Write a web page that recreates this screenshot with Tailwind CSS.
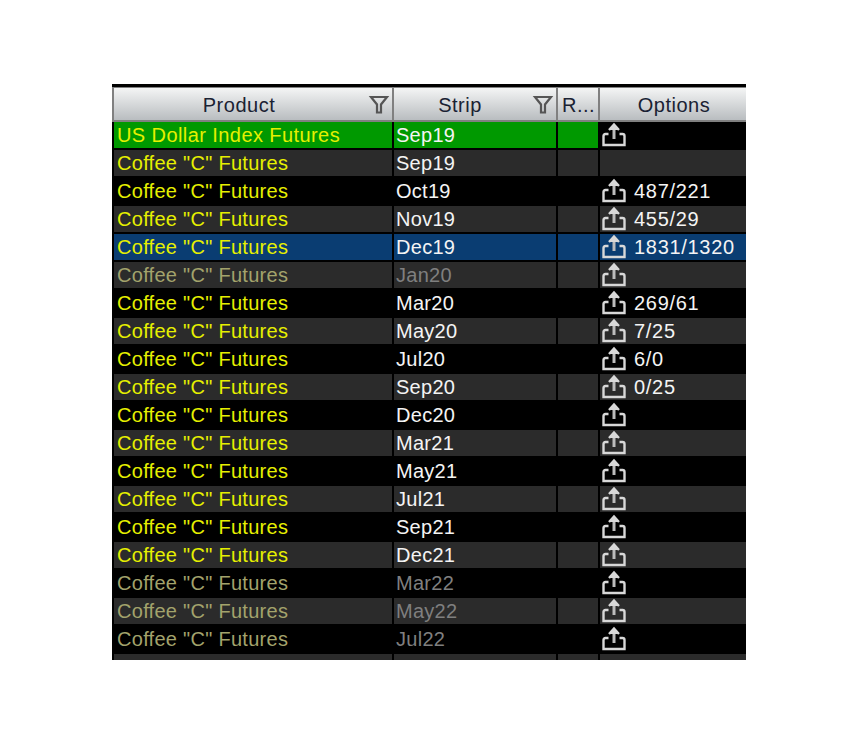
<!DOCTYPE html>
<html><head><meta charset="utf-8"><script src="https://cdn.jsdelivr.net/npm/@tailwindcss/browser@4"></script></head>
<body class="bg-white m-0">
<div class="w-[848px] h-[741px] pt-[84px] pl-[112px] font-['Liberation_Sans',Arial,sans-serif] text-[20px] leading-[26px] tracking-[0.28px]">
<div class="w-[634px] h-[576px] bg-black overflow-hidden pt-[3px]">
<div class="grid grid-cols-[282px_164px_42px_146px] h-[35px] border-t border-t-[#808080] border-b-2 border-b-[#808080] bg-gradient-to-b from-[#f4f5f5] to-[#b9bdc0] text-[#1a2233] tracking-[0.5px]">
<div class="relative border-l-2 border-l-[#808080] border-r-2 border-r-[#808080] flex items-center justify-center pt-[2px]"><span class="pr-[28px]">Product</span><svg class="absolute left-[254px] top-[6px]" width="22" height="22" viewBox="0 0 22 22" fill="none" stroke="#555" stroke-width="2.200"><path d="M3 3h16l-6 7.500v8h-4v-8z"/></svg></div>
<div class="relative border-r-2 border-r-[#808080] flex items-center justify-center pt-[2px]"><span class="pr-[30px]">Strip</span><svg class="absolute left-[138px] top-[6px]" width="22" height="22" viewBox="0 0 22 22" fill="none" stroke="#555" stroke-width="2.200"><path d="M3 3h16l-6 7.500v8h-4v-8z"/></svg></div>
<div class="border-r-2 border-r-[#808080] pl-[4px] flex items-center overflow-hidden pt-[2px]"><span>R...</span></div>
<div class="flex items-center justify-center pt-[2px] pl-[2px]"><span>Options</span></div>
</div>
<div class="flex flex-col gap-[2px] text-[#f4f4f4]">

<div class="grid grid-cols-[278px_162px_40px_146px] gap-x-[2px] ml-[2px] h-[26px]"><div class="bg-[#009900] text-[#e6f000] pl-[3px] tracking-[0.42px]">US Dollar Index Futures</div><div class="bg-[#009900] pl-[2px]">Sep19</div><div class="bg-[#009900]"></div><div class="flex pl-[2px]"><svg width="26" height="26" viewBox="0 0 26 26" fill="none" stroke="#d8d8d8" stroke-width="2.400"><path d="M12 5v12" stroke-width="3" stroke="#bcbcbc"/><path d="M7 8 12 2.500 17 8" fill="#d8d8d8"/><path d="M6.500 12H3.500Q1.500 12 1.500 14V23H22.500V14Q22.500 12 20.500 12H17.500"/></svg></div></div>

<div class="grid grid-cols-[278px_162px_40px_146px] gap-x-[2px] ml-[2px] h-[26px]"><div class="bg-[#2b2b2b] text-[#e6f000] pl-[3px]">Coffee "C" Futures</div><div class="bg-[#2b2b2b] pl-[2px]">Sep19</div><div class="bg-[#2b2b2b]"></div><div class="bg-[#2b2b2b]"></div></div>

<div class="grid grid-cols-[278px_162px_40px_146px] gap-x-[2px] ml-[2px] h-[26px]"><div class="text-[#e6f000] pl-[3px]">Coffee "C" Futures</div><div class="pl-[2px]">Oct19</div><div></div><div class="flex pl-[2px]"><svg width="26" height="26" viewBox="0 0 26 26" fill="none" stroke="#d8d8d8" stroke-width="2.400"><path d="M12 5v12" stroke-width="3" stroke="#bcbcbc"/><path d="M7 8 12 2.500 17 8" fill="#d8d8d8"/><path d="M6.500 12H3.500Q1.500 12 1.500 14V23H22.500V14Q22.500 12 20.500 12H17.500"/></svg><span class="ml-[6px] tracking-[0.7px]">487/221</span></div></div>

<div class="grid grid-cols-[278px_162px_40px_146px] gap-x-[2px] ml-[2px] h-[26px]"><div class="bg-[#2b2b2b] text-[#e6f000] pl-[3px]">Coffee "C" Futures</div><div class="bg-[#2b2b2b] pl-[2px]">Nov19</div><div class="bg-[#2b2b2b]"></div><div class="bg-[#2b2b2b] flex pl-[2px]"><svg width="26" height="26" viewBox="0 0 26 26" fill="none" stroke="#d8d8d8" stroke-width="2.400"><path d="M12 5v12" stroke-width="3" stroke="#bcbcbc"/><path d="M7 8 12 2.500 17 8" fill="#d8d8d8"/><path d="M6.500 12H3.500Q1.500 12 1.500 14V23H22.500V14Q22.500 12 20.500 12H17.500"/></svg><span class="ml-[6px] tracking-[0.7px]">455/29</span></div></div>

<div class="grid grid-cols-[278px_162px_40px_146px] gap-x-[2px] ml-[2px] h-[26px]"><div class="bg-[#0a3d72] text-[#e6f000] pl-[3px]">Coffee "C" Futures</div><div class="bg-[#0a3d72] pl-[2px]">Dec19</div><div class="bg-[#0a3d72]"></div><div class="bg-[#0a3d72] flex pl-[2px]"><svg width="26" height="26" viewBox="0 0 26 26" fill="none" stroke="#d8d8d8" stroke-width="2.400"><path d="M12 5v12" stroke-width="3" stroke="#bcbcbc"/><path d="M7 8 12 2.500 17 8" fill="#d8d8d8"/><path d="M6.500 12H3.500Q1.500 12 1.500 14V23H22.500V14Q22.500 12 20.500 12H17.500"/></svg><span class="ml-[6px] tracking-[0.7px]">1831/1320</span></div></div>

<div class="grid grid-cols-[278px_162px_40px_146px] gap-x-[2px] ml-[2px] h-[26px]"><div class="bg-[#2b2b2b] text-[#a3a36c] pl-[3px]">Coffee "C" Futures</div><div class="bg-[#2b2b2b] text-[#7f7f7f] pl-[2px]">Jan20</div><div class="bg-[#2b2b2b]"></div><div class="bg-[#2b2b2b] flex pl-[2px]"><svg width="26" height="26" viewBox="0 0 26 26" fill="none" stroke="#d8d8d8" stroke-width="2.400"><path d="M12 5v12" stroke-width="3" stroke="#bcbcbc"/><path d="M7 8 12 2.500 17 8" fill="#d8d8d8"/><path d="M6.500 12H3.500Q1.500 12 1.500 14V23H22.500V14Q22.500 12 20.500 12H17.500"/></svg></div></div>

<div class="grid grid-cols-[278px_162px_40px_146px] gap-x-[2px] ml-[2px] h-[26px]"><div class="text-[#e6f000] pl-[3px]">Coffee "C" Futures</div><div class="pl-[2px]">Mar20</div><div></div><div class="flex pl-[2px]"><svg width="26" height="26" viewBox="0 0 26 26" fill="none" stroke="#d8d8d8" stroke-width="2.400"><path d="M12 5v12" stroke-width="3" stroke="#bcbcbc"/><path d="M7 8 12 2.500 17 8" fill="#d8d8d8"/><path d="M6.500 12H3.500Q1.500 12 1.500 14V23H22.500V14Q22.500 12 20.500 12H17.500"/></svg><span class="ml-[6px] tracking-[0.7px]">269/61</span></div></div>

<div class="grid grid-cols-[278px_162px_40px_146px] gap-x-[2px] ml-[2px] h-[26px]"><div class="bg-[#2b2b2b] text-[#e6f000] pl-[3px]">Coffee "C" Futures</div><div class="bg-[#2b2b2b] pl-[2px]">May20</div><div class="bg-[#2b2b2b]"></div><div class="bg-[#2b2b2b] flex pl-[2px]"><svg width="26" height="26" viewBox="0 0 26 26" fill="none" stroke="#d8d8d8" stroke-width="2.400"><path d="M12 5v12" stroke-width="3" stroke="#bcbcbc"/><path d="M7 8 12 2.500 17 8" fill="#d8d8d8"/><path d="M6.500 12H3.500Q1.500 12 1.500 14V23H22.500V14Q22.500 12 20.500 12H17.500"/></svg><span class="ml-[6px] tracking-[0.7px]">7/25</span></div></div>

<div class="grid grid-cols-[278px_162px_40px_146px] gap-x-[2px] ml-[2px] h-[26px]"><div class="text-[#e6f000] pl-[3px]">Coffee "C" Futures</div><div class="pl-[2px]">Jul20</div><div></div><div class="flex pl-[2px]"><svg width="26" height="26" viewBox="0 0 26 26" fill="none" stroke="#d8d8d8" stroke-width="2.400"><path d="M12 5v12" stroke-width="3" stroke="#bcbcbc"/><path d="M7 8 12 2.500 17 8" fill="#d8d8d8"/><path d="M6.500 12H3.500Q1.500 12 1.500 14V23H22.500V14Q22.500 12 20.500 12H17.500"/></svg><span class="ml-[6px] tracking-[0.7px]">6/0</span></div></div>

<div class="grid grid-cols-[278px_162px_40px_146px] gap-x-[2px] ml-[2px] h-[26px]"><div class="bg-[#2b2b2b] text-[#e6f000] pl-[3px]">Coffee "C" Futures</div><div class="bg-[#2b2b2b] pl-[2px]">Sep20</div><div class="bg-[#2b2b2b]"></div><div class="bg-[#2b2b2b] flex pl-[2px]"><svg width="26" height="26" viewBox="0 0 26 26" fill="none" stroke="#d8d8d8" stroke-width="2.400"><path d="M12 5v12" stroke-width="3" stroke="#bcbcbc"/><path d="M7 8 12 2.500 17 8" fill="#d8d8d8"/><path d="M6.500 12H3.500Q1.500 12 1.500 14V23H22.500V14Q22.500 12 20.500 12H17.500"/></svg><span class="ml-[6px] tracking-[0.7px]">0/25</span></div></div>

<div class="grid grid-cols-[278px_162px_40px_146px] gap-x-[2px] ml-[2px] h-[26px]"><div class="text-[#e6f000] pl-[3px]">Coffee "C" Futures</div><div class="pl-[2px]">Dec20</div><div></div><div class="flex pl-[2px]"><svg width="26" height="26" viewBox="0 0 26 26" fill="none" stroke="#d8d8d8" stroke-width="2.400"><path d="M12 5v12" stroke-width="3" stroke="#bcbcbc"/><path d="M7 8 12 2.500 17 8" fill="#d8d8d8"/><path d="M6.500 12H3.500Q1.500 12 1.500 14V23H22.500V14Q22.500 12 20.500 12H17.500"/></svg></div></div>

<div class="grid grid-cols-[278px_162px_40px_146px] gap-x-[2px] ml-[2px] h-[26px]"><div class="bg-[#2b2b2b] text-[#e6f000] pl-[3px]">Coffee "C" Futures</div><div class="bg-[#2b2b2b] pl-[2px]">Mar21</div><div class="bg-[#2b2b2b]"></div><div class="bg-[#2b2b2b] flex pl-[2px]"><svg width="26" height="26" viewBox="0 0 26 26" fill="none" stroke="#d8d8d8" stroke-width="2.400"><path d="M12 5v12" stroke-width="3" stroke="#bcbcbc"/><path d="M7 8 12 2.500 17 8" fill="#d8d8d8"/><path d="M6.500 12H3.500Q1.500 12 1.500 14V23H22.500V14Q22.500 12 20.500 12H17.500"/></svg></div></div>

<div class="grid grid-cols-[278px_162px_40px_146px] gap-x-[2px] ml-[2px] h-[26px]"><div class="text-[#e6f000] pl-[3px]">Coffee "C" Futures</div><div class="pl-[2px]">May21</div><div></div><div class="flex pl-[2px]"><svg width="26" height="26" viewBox="0 0 26 26" fill="none" stroke="#d8d8d8" stroke-width="2.400"><path d="M12 5v12" stroke-width="3" stroke="#bcbcbc"/><path d="M7 8 12 2.500 17 8" fill="#d8d8d8"/><path d="M6.500 12H3.500Q1.500 12 1.500 14V23H22.500V14Q22.500 12 20.500 12H17.500"/></svg></div></div>

<div class="grid grid-cols-[278px_162px_40px_146px] gap-x-[2px] ml-[2px] h-[26px]"><div class="bg-[#2b2b2b] text-[#e6f000] pl-[3px]">Coffee "C" Futures</div><div class="bg-[#2b2b2b] pl-[2px]">Jul21</div><div class="bg-[#2b2b2b]"></div><div class="bg-[#2b2b2b] flex pl-[2px]"><svg width="26" height="26" viewBox="0 0 26 26" fill="none" stroke="#d8d8d8" stroke-width="2.400"><path d="M12 5v12" stroke-width="3" stroke="#bcbcbc"/><path d="M7 8 12 2.500 17 8" fill="#d8d8d8"/><path d="M6.500 12H3.500Q1.500 12 1.500 14V23H22.500V14Q22.500 12 20.500 12H17.500"/></svg></div></div>

<div class="grid grid-cols-[278px_162px_40px_146px] gap-x-[2px] ml-[2px] h-[26px]"><div class="text-[#e6f000] pl-[3px]">Coffee "C" Futures</div><div class="pl-[2px]">Sep21</div><div></div><div class="flex pl-[2px]"><svg width="26" height="26" viewBox="0 0 26 26" fill="none" stroke="#d8d8d8" stroke-width="2.400"><path d="M12 5v12" stroke-width="3" stroke="#bcbcbc"/><path d="M7 8 12 2.500 17 8" fill="#d8d8d8"/><path d="M6.500 12H3.500Q1.500 12 1.500 14V23H22.500V14Q22.500 12 20.500 12H17.500"/></svg></div></div>

<div class="grid grid-cols-[278px_162px_40px_146px] gap-x-[2px] ml-[2px] h-[26px]"><div class="bg-[#2b2b2b] text-[#e6f000] pl-[3px]">Coffee "C" Futures</div><div class="bg-[#2b2b2b] pl-[2px]">Dec21</div><div class="bg-[#2b2b2b]"></div><div class="bg-[#2b2b2b] flex pl-[2px]"><svg width="26" height="26" viewBox="0 0 26 26" fill="none" stroke="#d8d8d8" stroke-width="2.400"><path d="M12 5v12" stroke-width="3" stroke="#bcbcbc"/><path d="M7 8 12 2.500 17 8" fill="#d8d8d8"/><path d="M6.500 12H3.500Q1.500 12 1.500 14V23H22.500V14Q22.500 12 20.500 12H17.500"/></svg></div></div>

<div class="grid grid-cols-[278px_162px_40px_146px] gap-x-[2px] ml-[2px] h-[26px]"><div class="text-[#a3a36c] pl-[3px]">Coffee "C" Futures</div><div class="text-[#7f7f7f] pl-[2px]">Mar22</div><div></div><div class="flex pl-[2px]"><svg width="26" height="26" viewBox="0 0 26 26" fill="none" stroke="#d8d8d8" stroke-width="2.400"><path d="M12 5v12" stroke-width="3" stroke="#bcbcbc"/><path d="M7 8 12 2.500 17 8" fill="#d8d8d8"/><path d="M6.500 12H3.500Q1.500 12 1.500 14V23H22.500V14Q22.500 12 20.500 12H17.500"/></svg></div></div>

<div class="grid grid-cols-[278px_162px_40px_146px] gap-x-[2px] ml-[2px] h-[26px]"><div class="bg-[#2b2b2b] text-[#a3a36c] pl-[3px]">Coffee "C" Futures</div><div class="bg-[#2b2b2b] text-[#7f7f7f] pl-[2px]">May22</div><div class="bg-[#2b2b2b]"></div><div class="bg-[#2b2b2b] flex pl-[2px]"><svg width="26" height="26" viewBox="0 0 26 26" fill="none" stroke="#d8d8d8" stroke-width="2.400"><path d="M12 5v12" stroke-width="3" stroke="#bcbcbc"/><path d="M7 8 12 2.500 17 8" fill="#d8d8d8"/><path d="M6.500 12H3.500Q1.500 12 1.500 14V23H22.500V14Q22.500 12 20.500 12H17.500"/></svg></div></div>

<div class="grid grid-cols-[278px_162px_40px_146px] gap-x-[2px] ml-[2px] h-[26px]"><div class="text-[#a3a36c] pl-[3px]">Coffee "C" Futures</div><div class="text-[#7f7f7f] pl-[2px]">Jul22</div><div></div><div class="flex pl-[2px]"><svg width="26" height="26" viewBox="0 0 26 26" fill="none" stroke="#d8d8d8" stroke-width="2.400"><path d="M12 5v12" stroke-width="3" stroke="#bcbcbc"/><path d="M7 8 12 2.500 17 8" fill="#d8d8d8"/><path d="M6.500 12H3.500Q1.500 12 1.500 14V23H22.500V14Q22.500 12 20.500 12H17.500"/></svg></div></div>

<div class="grid grid-cols-[278px_162px_40px_146px] gap-x-[2px] ml-[2px] h-[26px]"><div class="bg-[#2b2b2b]"></div><div class="bg-[#2b2b2b]"></div><div class="bg-[#2b2b2b]"></div><div class="bg-[#2b2b2b]"></div></div>
</div>
</div>
</div>
</body></html>
